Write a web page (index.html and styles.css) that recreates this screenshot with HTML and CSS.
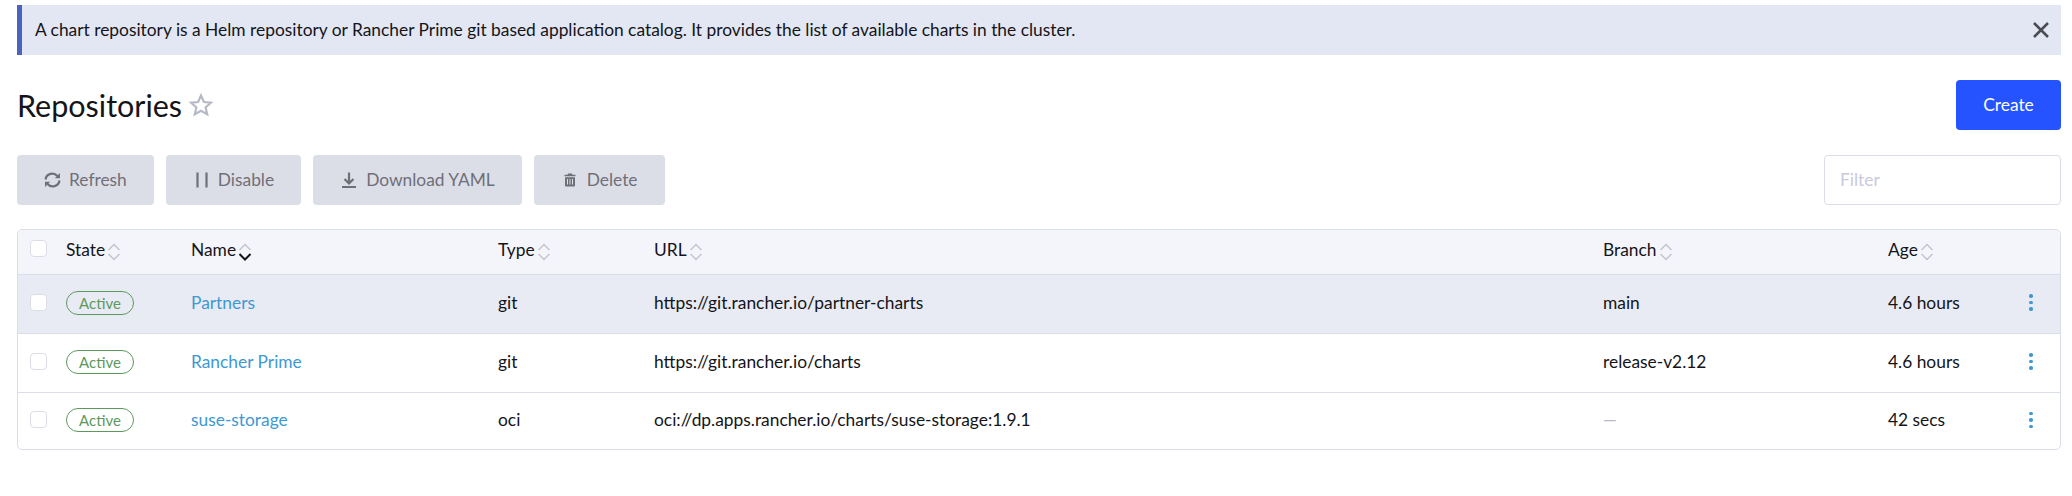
FILE: index.html
```html
<!DOCTYPE html>
<html>
<head>
    <meta charset="utf-8">
    <title>Repositories</title>
    <link rel="stylesheet" href="styles.css">
</head>
<body>
    <div class="banner">
        <span>A chart repository is a Helm repository or Rancher Prime git based application catalog. It provides the list of available charts in the cluster.</span>
        <svg class="banner-close" width="16" height="16" viewBox="0 0 16 16"><path d="M1 1L15 15M15 1L1 15"/></svg>
    </div>

    <div class="title-row">
        <div class="title">
            <h1>Repositories</h1>
            <svg class="star" width="24" height="24" viewBox="0 0 24 24"><path d="M12 2.5l2.9 6.5 7 .7-5.3 4.7 1.6 6.9-6.2-3.6-6.2 3.6 1.6-6.9-5.3-4.7 7-.7z"/></svg>
        </div>
        <button class="btn-create">Create</button>
    </div>

    <div class="toolbar">
        <div class="actions">
            <button class="btn-action">
                <svg width="17" height="18" viewBox="0 0 17 18"><path class="line" d="M1.500 8.500A6.800 6.800 0 0 1 13.400 5M15.500 9.500A6.800 6.800 0 0 1 3.600 13"/><path class="solid" d="M16 2v5.200h-5.200zM1 16v-5.200h5.200z"/></svg>
                Refresh
            </button>
            <button class="btn-action">
                <svg width="17" height="18" viewBox="0 0 17 18"><path class="line" d="M4.500 1.500v15M13.500 1.500v15"/></svg>
                Disable
            </button>
            <button class="btn-action">
                <svg width="18" height="18" viewBox="0 0 18 18"><path class="line" d="M9 1.500v11M4.500 8l4.500 4.500L13.500 8M2 16h14"/></svg>
                Download YAML
            </button>
            <button class="btn-action">
                <svg width="18" height="18" viewBox="0 0 18 18"><path class="solid" d="M7 2.500h4l.5 1.200h3v1.600h-11V3.700h3zM4 6.300h10v8.200a1 1 0 0 1-1 1H5a1 1 0 0 1-1-1z"/><path class="stripes" d="M6.500 8v5.500M9 8v5.500M11.500 8v5.500"/></svg>
                Delete
            </button>
        </div>
        <input class="filter" type="text" placeholder="Filter">
    </div>

    <div class="table-wrap">
        <table>
            <colgroup>
                <col class="col-check"><col class="col-state"><col class="col-name"><col class="col-type">
                <col class="col-url"><col class="col-branch"><col class="col-age"><col>
            </colgroup>
            <thead>
                <tr>
                    <th><span class="check"></span></th>
                    <th>State<svg class="sort" width="14" height="24" viewBox="0 0 14 24"><path d="M1.500 10L7 4.500l5.500 5.500M1.500 14L7 19.500l5.500-5.500"/></svg></th>
                    <th>Name<svg class="sort" width="14" height="24" viewBox="0 0 14 24"><path d="M1.500 10L7 4.500l5.500 5.500"/><path class="on" d="M1.500 14L7 19.500l5.500-5.500"/></svg></th>
                    <th>Type<svg class="sort" width="14" height="24" viewBox="0 0 14 24"><path d="M1.500 10L7 4.500l5.500 5.500M1.500 14L7 19.500l5.500-5.500"/></svg></th>
                    <th>URL<svg class="sort" width="14" height="24" viewBox="0 0 14 24"><path d="M1.500 10L7 4.500l5.500 5.500M1.500 14L7 19.500l5.500-5.500"/></svg></th>
                    <th>Branch<svg class="sort" width="14" height="24" viewBox="0 0 14 24"><path d="M1.500 10L7 4.500l5.500 5.500M1.500 14L7 19.500l5.500-5.500"/></svg></th>
                    <th>Age<svg class="sort" width="14" height="24" viewBox="0 0 14 24"><path d="M1.500 10L7 4.500l5.500 5.500M1.500 14L7 19.500l5.500-5.500"/></svg></th>
                    <th></th>
                </tr>
            </thead>
            <tbody>
                <tr class="hover">
                    <td><span class="check"></span></td>
                    <td><span class="badge">Active</span></td>
                    <td><a href="#">Partners</a></td>
                    <td>git</td>
                    <td>https://git.rancher.io/partner-charts</td>
                    <td>main</td>
                    <td>4.6 hours</td>
                    <td><span class="dots"><i></i><i></i><i></i></span></td>
                </tr>
                <tr>
                    <td><span class="check"></span></td>
                    <td><span class="badge">Active</span></td>
                    <td><a href="#">Rancher Prime</a></td>
                    <td>git</td>
                    <td>https://git.rancher.io/charts</td>
                    <td>release-v2.12</td>
                    <td>4.6 hours</td>
                    <td><span class="dots"><i></i><i></i><i></i></span></td>
                </tr>
                <tr>
                    <td><span class="check"></span></td>
                    <td><span class="badge">Active</span></td>
                    <td><a href="#">suse-storage</a></td>
                    <td>oci</td>
                    <td>oci://dp.apps.rancher.io/charts/suse-storage:1.9.1</td>
                    <td class="empty">—</td>
                    <td>42 secs</td>
                    <td><span class="dots"><i></i><i></i><i></i></span></td>
                </tr>
            </tbody>
        </table>
    </div>
</body>
</html>
```

FILE: styles.css
```css
* {
    box-sizing: border-box;
}

body {
    margin: 0;
    padding: 5px 11px 0 17px;
    font-family: Lato, "Liberation Sans", sans-serif;
    font-size: 17.36px;
    color: #141419;
    background: #fff;
}

/* banner */
.banner {
    display: flex;
    align-items: center;
    justify-content: space-between;
    height: 50px;
    margin-bottom: 25px;
    padding: 0 12px 1px 13px;
    background: #e3e7f3;
    border-left: 5px solid #4a62c0;
}

.banner-close path {
    fill: none;
    stroke: #4b4b52;
    stroke-width: 2.5;
}

/* title */
.title-row {
    display: flex;
    align-items: center;
    justify-content: space-between;
    height: 50px;
    margin-bottom: 25px;
}

.title {
    display: flex;
    align-items: center;
    gap: 7px;
}

h1 {
    margin: 0;
    font-size: 30.5px;
    font-weight: 400;
}

.star path {
    fill: none;
    stroke: #b6b9c6;
    stroke-width: 2.2;
}

.btn-create {
    width: 105px;
    height: 50px;
    padding: 0 0 2px;
    border: 0;
    border-radius: 4px;
    background: #2453ff;
    color: #fff;
    font: inherit;
}

/* toolbar */
.toolbar {
    display: flex;
    justify-content: space-between;
    height: 50px;
    margin-bottom: 24px;
}

.actions {
    display: flex;
    gap: 12px;
}

.btn-action {
    display: flex;
    align-items: center;
    gap: 8px;
    height: 50px;
    padding: 0 27px 1px;
    border: 0;
    border-radius: 4px;
    background: #dcdee7;
    color: #6f6f78;
    font: inherit;
}

.btn-action svg {
    flex: none;
}

.btn-action .line {
    fill: none;
    stroke: #6f6f78;
    stroke-width: 2.2;
}

.btn-action .solid {
    fill: #6f6f78;
}

.btn-action .stripes {
    fill: none;
    stroke: #dcdee7;
    stroke-width: 1;
}

.filter {
    width: 237px;
    height: 50px;
    padding: 0 15px 2px;
    border: 1px solid #dcdee7;
    border-radius: 4px;
    font: inherit;
}

.filter::placeholder {
    color: #c8cadb;
}

/* table */
.table-wrap {
    border: 1px solid #dcdee7;
    border-radius: 5px;
    overflow: hidden;
}

table {
    width: 100%;
    border-collapse: collapse;
    table-layout: fixed;
}

.col-check { width: 48px; }
.col-state { width: 125px; }
.col-name { width: 307px; }
.col-type { width: 156px; }
.col-url { width: 949px; }
.col-branch { width: 285px; }
.col-age { width: 120px; }

th {
    height: 44px;
    padding: 0;
    background: #f4f5fa;
    border-bottom: 1px solid #dcdee7;
    font-weight: 400;
    text-align: left;
    white-space: nowrap;
}

th .check {
    margin-bottom: 6px;
}

td {
    height: 59px;
    padding: 0 0 2px;
    border-bottom: 1px solid #dcdee7;
}

tr:last-child td {
    height: 57px;
    border-bottom: 0;
}

tr.hover td {
    background: #e8ebf3;
}

th:first-child, td:first-child {
    padding-left: 12px;
}

.sort {
    margin-left: 2px;
    vertical-align: middle;
}

.sort path {
    fill: none;
    stroke: #c4c5cd;
    stroke-width: 1.500;
}

.sort .on {
    stroke: #141419;
    stroke-width: 2;
}

.check {
    display: block;
    width: 17px;
    height: 17px;
    background: #fff;
    border: 1px solid #dcdee7;
    border-radius: 4px;
}

.badge {
    display: inline-block;
    width: 68px;
    height: 24px;
    border: 1px solid #5d995d;
    border-radius: 12px;
    color: #5d995d;
    font-size: 15px;
    line-height: 22px;
    text-align: center;
}

a {
    color: #3d98d3;
    text-decoration: none;
}

.empty {
    color: #b6b9c6;
}

.dots {
    display: flex;
    flex-direction: column;
    gap: 3px;
    width: 3.500px;
    margin-left: 21px;
}

.dots i {
    width: 3.500px;
    height: 3.500px;
    border-radius: 50%;
    background: #3d98d3;
}
```
